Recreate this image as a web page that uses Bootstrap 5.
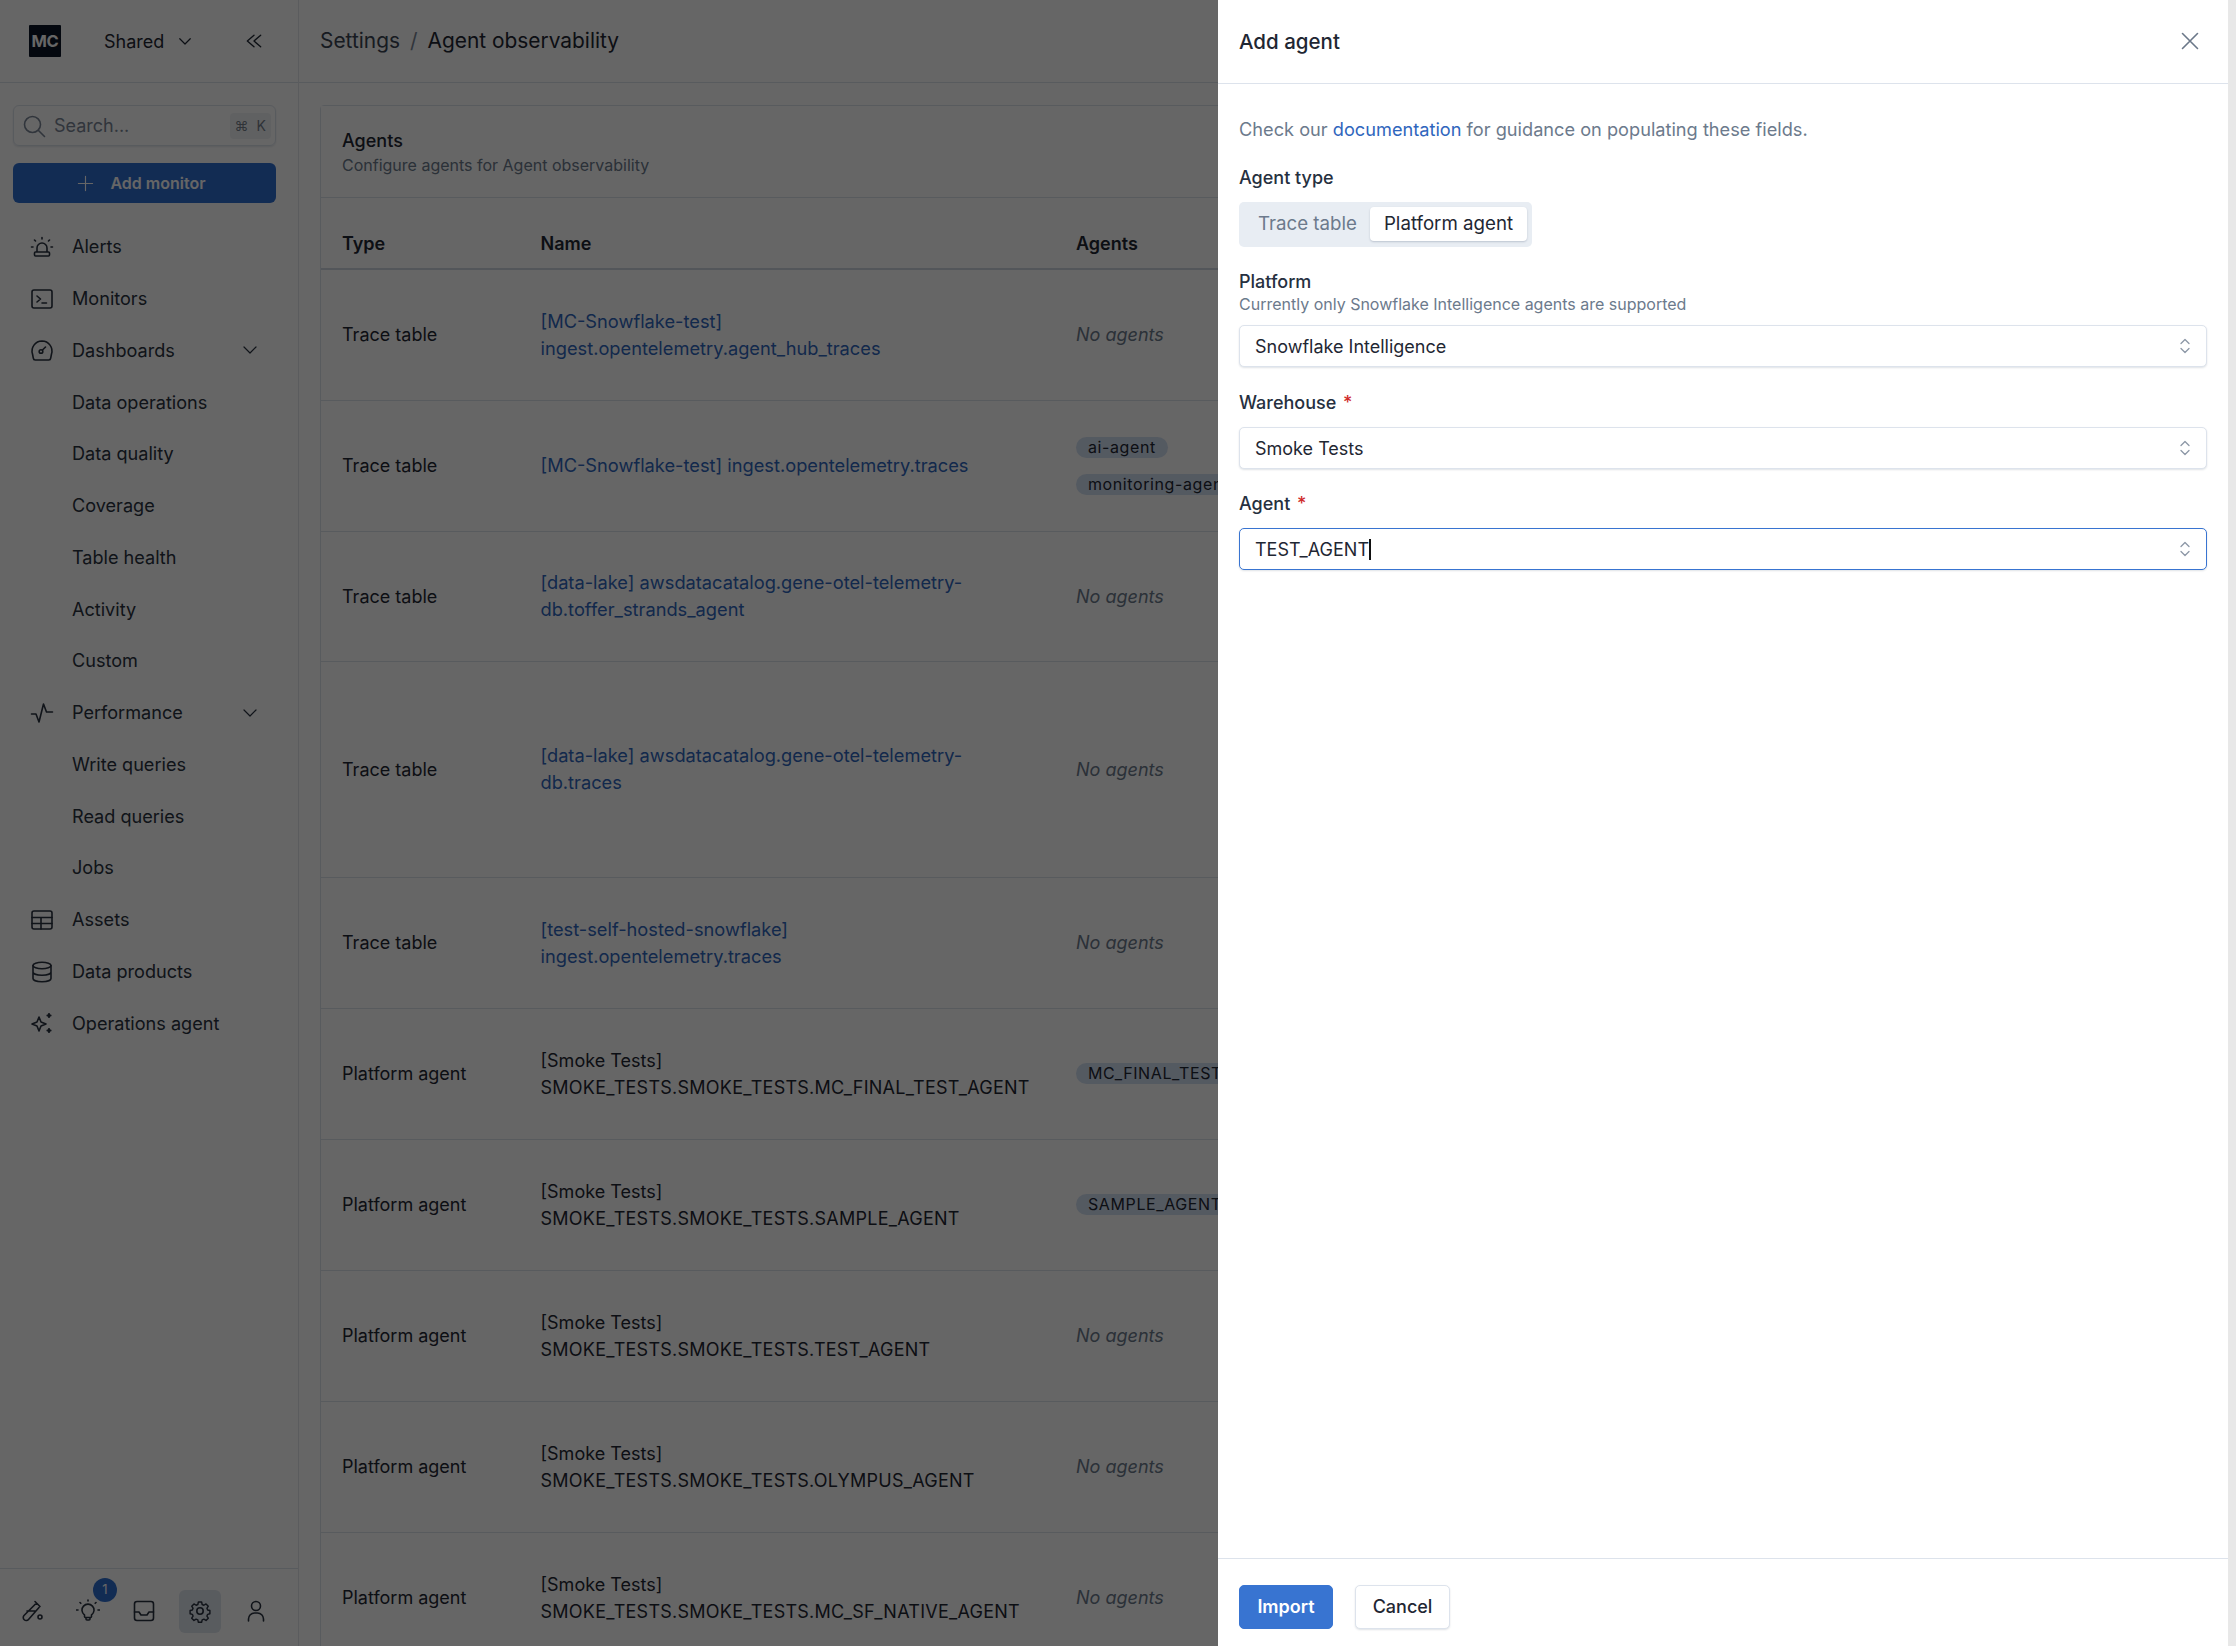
<!doctype html>
<html lang="en"><head><meta charset="utf-8"><title>Agent observability</title>
<link href="https://cdn.jsdelivr.net/npm/bootstrap@5.3.0/dist/css/bootstrap.min.css" rel="stylesheet">
<style>
:root{--ink:#1f2733;--muted:#6c7a8c;--line:#dde3ec;--blue:#3874d1;}
html,body{height:100%;overflow:hidden}
body{font-family:Inter,"Liberation Sans",sans-serif;font-size:18px;color:var(--ink);background:#fff}
svg.ico{width:24px;height:24px;fill:none;stroke:currentColor;stroke-width:1.6;stroke-linecap:round;stroke-linejoin:round;flex:none}
.side{width:299px;flex:none;border-right:1px solid #e3e6ea;height:100vh;background:#fff}
.topbar{height:83px;flex:none;border-bottom:1px solid var(--line)}
.side-top{padding-left:29px;gap:0}
.mc-logo{width:32px;height:32px;background:#0b1526;color:#fff;font-weight:700;font-size:16.5px;border-radius:1px;letter-spacing:-.2px}
.shared{margin-left:43px;font-size:18px;width:72px}
.side-search{margin:22px 22px 0 13px;height:41px;border:1px solid var(--line);border-radius:6px;padding:0 4px 0 8px;color:#7a8696;box-shadow:0 1px 2px rgba(30,50,80,.12)}
.kbd-hint{background:#f1f3f6;border-radius:4px;font-size:14px;padding:1px 5px;color:#77808c;height:26px;margin-left:auto}
.btn-add{margin:17px 22px 0 13px;height:40px;background:#2f6ed0;border:0;border-radius:6px;color:#fff;font-weight:600;font-size:16px;--bs-btn-color:#fff;padding-right:18px}
.nav-stack{margin-top:18px;padding:0;list-style:none}
.nav-row{height:51.75px;padding-left:72px;padding-right:39px;position:relative;font-size:18.1px;color:#2a3240}
.nav-row svg.lead-ico{position:absolute;left:30px;top:14px}
.nav-row .chev{margin-left:auto}
.side-bottom{height:78px;border-top:1px solid var(--line);padding:7px 0 0 11px}
.bot-btn{width:42px;height:43px;margin-right:14px;border-radius:6px;position:relative;color:#2a3240}
.bot-btn.on{background:#dfe5ee}
.bot-badge{position:absolute;top:-12px;left:26px;width:24px;height:24px;border-radius:50%;background:#2f6ed0;color:#fff;font-size:13px;line-height:1}
.main-col{min-width:0;height:100vh}
.crumbs{padding-left:21px;font-size:20.9px;gap:10px}
.crumbs .first{color:#3b4553}.crumbs .sep{color:#7a8696}
.agents-card{margin:22px 0 0 21px;width:1880px;border:1px solid var(--line);border-radius:4px 0 0 0;--bs-card-bg:#fff}
.agents-head{height:92px;padding:23px 21px 0;border-bottom:1px solid var(--line);background:#fff}
.agents-head .ttl{font-weight:500;font-size:18px;line-height:24px}
.agents-head .sub{font-size:16px;color:var(--muted);line-height:24px}
.agent-tbl{table-layout:fixed;margin:0;--bs-table-border-color:var(--line);font-size:18px;line-height:27px;color:var(--ink)}
.agent-tbl th{font-weight:600;height:71px;vertical-align:bottom;padding:8px 0 11px 21px;border-bottom:2px solid #cfd6e0}
.agent-tbl td{vertical-align:middle;padding:0 0 0 21px}
.agent-tbl .c1{width:198.500px}.agent-tbl .c2{width:535.500px}
.agent-tbl a{color:#2f66bd;text-decoration:none;font-size:18.25px}
.caps-line{letter-spacing:.25px}
.none-txt{font-style:italic;color:var(--muted)}
.chip{display:block;width:fit-content;background:#d3e0f3;border-radius:11px;height:21px;font-size:16px;line-height:21px;padding:0 12px;letter-spacing:.6px;white-space:nowrap;color:#1f2733}
.chip+.chip{margin-top:16px}
.veil.offcanvas-backdrop{opacity:1!important;background:rgba(0,0,0,.6);width:100vw;height:100vh}
.scroll-strip{position:fixed;top:0;right:0;bottom:0;width:8px;background:#e8e8e8;z-index:1046}
.drawer.offcanvas{--bs-offcanvas-width:1010px;right:8px;border:0;color:var(--ink)}
.drawer .offcanvas-header{height:84px;padding:0 26px 0 21px;border-bottom:1px solid var(--line)}
.drawer .offcanvas-title{font-size:20.5px;font-weight:500;line-height:1;padding-top:2px}
.x-btn{background:none;border:0;padding:0;color:#6b7889;width:24px;height:24px;display:flex;margin-top:-2px}
.drawer .offcanvas-body{padding:32px 21px 0;overflow:hidden}
.intro{margin:0;line-height:27px;color:var(--muted);font-size:18.2px}
.intro a{color:#2f66bd;text-decoration:none}
.f-label{font-size:18px;font-weight:500;line-height:24px;margin:0;color:#263040}
.f-label .req{color:#d02b2b;margin-left:2px}
.f-help{font-size:16px;color:var(--muted);line-height:20px}
.seg{display:inline-flex;background:#e8edf3;border-radius:5px;padding:5px 5px 6px 6px;height:45px;margin-top:12px;margin-bottom:23px;font-size:18.7px}
.seg span{display:flex;align-items:center;border-radius:4px;padding-top:1px!important}
.seg .off{color:var(--muted);padding:0 13px 0 13px}
.seg .act{background:#fff;padding:0 14px;box-shadow:0 1px 2px rgba(30,50,80,.22)}
.pick.form-select{height:42px;width:100%;padding:0 40px 0 15px;line-height:41px;font-size:18px;color:var(--ink);border:1px solid var(--line);border-radius:5px;box-shadow:0 1px 2px rgba(30,50,80,.14);background-image:none;background-color:#fff;position:relative}
.pick svg{position:absolute;right:14px;top:11px;width:14px;height:18px;fill:none;stroke:#8c97a6;stroke-width:1.3;stroke-linecap:round;stroke-linejoin:round}
.pick.focused{border-color:var(--blue)}
.caret-bar{display:inline-block;width:1.5px;height:21px;background:#111;vertical-align:-4px}
.drawer-foot{height:88px;border-top:1px solid var(--line);padding:26px 21px 0;gap:22px;flex:none}
.btn-imp,.btn-can{width:94px;height:44px;border-radius:5px;font-weight:600;font-size:18px;padding:0;line-height:1}
.btn-can{width:95px}
.btn-imp{--bs-btn-bg:var(--blue);--bs-btn-border-color:var(--blue);--bs-btn-color:#fff}
.btn-can{--bs-btn-bg:#fff;--bs-btn-border-color:#dde3ec;--bs-btn-color:#1f2733;box-shadow:0 1px 2px rgba(30,50,80,.14);font-weight:500}
</style></head>
<body>
<div class="d-flex">
<aside class="side d-flex flex-column">
  <div class="topbar side-top d-flex align-items-center">
    <div class="mc-logo d-flex align-items-center justify-content-center">MC</div>
    <span class="shared">Shared</span>
    <svg class="ico" style="width:18px;height:18px" viewBox="0 0 24 24"><path d="M5 9l7 7 7-7"/></svg>
    <svg class="ico" style="margin-left:50px;width:20px;height:20px" viewBox="0 0 24 24"><path d="M12 5l-8 7 8 7M20 5l-8 7 8 7"/></svg>
  </div>
  <div class="side-search d-flex align-items-center gap-2">
    <svg class="ico" viewBox="0 0 24 24"><circle cx="10.5" cy="10.5" r="8"/><path d="M16.5 16.5l6 6"/></svg>
    <span>Search...</span><span class="kbd-hint d-flex align-items-center gap-2"><span>⌘</span><span>K</span></span>
  </div>
  <button class="btn btn-add d-flex align-items-center justify-content-center gap-3" type="button"><svg class="ico" style="width:17px;height:17px" viewBox="0 0 24 24"><path d="M12 2v20M2 12h20"/></svg>Add monitor</button>
  <ul class="nav-stack">
    <li class="nav-row d-flex align-items-center"><svg class="ico lead-ico" viewBox="0 0 24 24"><path d="M7 17v-4a5 5 0 0 1 10 0v4M5.500 17h13a1 1 0 0 1 1 1v2a1 1 0 0 1-1 1h-13a1 1 0 0 1-1-1v-2a1 1 0 0 1 1-1zM12 2.500v1.500M4.500 5l1 1M19.500 5l-1 1M1.500 12h1.500M21 12h1.500"/></svg>Alerts</li>
    <li class="nav-row d-flex align-items-center"><svg class="ico lead-ico" viewBox="0 0 24 24"><rect x="2" y="3" width="20" height="18" rx="2"/><path d="M7 9l3.500 3L7 15M12 16h4.500"/></svg>Monitors</li>
    <li class="nav-row d-flex align-items-center"><svg class="ico lead-ico" viewBox="0 0 24 24"><path d="M12 2a10 10 0 0 1 9.500 13l-.8 4.200a2 2 0 0 1-2 1.800H5.300a2 2 0 0 1-2-1.800L2.500 15A10 10 0 0 1 12 2z"/><circle cx="11" cy="12.500" r="1.800"/><path d="M12.500 11l3-3"/></svg>Dashboards<svg class="ico chev" style="width:18px;height:18px" viewBox="0 0 24 24"><path d="M4 8l8 8 8-8"/></svg></li>
    <li class="nav-row d-flex align-items-center">Data operations</li>
    <li class="nav-row d-flex align-items-center">Data quality</li>
    <li class="nav-row d-flex align-items-center">Coverage</li>
    <li class="nav-row d-flex align-items-center">Table health</li>
    <li class="nav-row d-flex align-items-center">Activity</li>
    <li class="nav-row d-flex align-items-center">Custom</li>
    <li class="nav-row d-flex align-items-center"><svg class="ico lead-ico" viewBox="0 0 24 24"><path d="M1.500 13H6l3 8 4.500-18 3 8h6"/></svg>Performance<svg class="ico chev" style="width:18px;height:18px" viewBox="0 0 24 24"><path d="M4 8l8 8 8-8"/></svg></li>
    <li class="nav-row d-flex align-items-center">Write queries</li>
    <li class="nav-row d-flex align-items-center">Read queries</li>
    <li class="nav-row d-flex align-items-center">Jobs</li>
    <li class="nav-row d-flex align-items-center"><svg class="ico lead-ico" viewBox="0 0 24 24"><rect x="2" y="3" width="20" height="18" rx="2"/><path d="M2 9.500h20M11 9.500V21M2 15.500h20"/></svg>Assets</li>
    <li class="nav-row d-flex align-items-center"><svg class="ico lead-ico" viewBox="0 0 24 24"><ellipse cx="12" cy="5.500" rx="9" ry="3.200"/><path d="M3 5.500v13c0 1.800 4 3.200 9 3.200s9-1.400 9-3.200v-13M3 12c0 1.800 4 3.200 9 3.200s9-1.400 9-3.200"/></svg>Data products</li>
    <li class="nav-row d-flex align-items-center"><svg class="ico lead-ico" viewBox="0 0 24 24"><path d="M9 6l2 5 5 2-5 2-2 5-2-5-5-2 5-2z"/><path d="M19 3v3M17.500 4.500h3M19 18v3M17.500 19.500h3" stroke-width="2.200"/></svg>Operations agent</li>
  </ul>
  <div class="side-bottom mt-auto d-flex align-items-center">
    <span class="bot-btn d-flex align-items-center justify-content-center"><svg class="ico" viewBox="0 0 24 24"><path d="M15 2.500l5 5M16.500 4L4 16.500a3 3 0 0 0 4.500 4L19 8.500M7 12h8"/><circle cx="20" cy="18" r="2"/></svg></span>
    <span class="bot-btn d-flex align-items-center justify-content-center"><svg class="ico" viewBox="0 0 24 24"><path d="M8.500 16a6 6 0 1 1 7 0v1.500a1 1 0 0 1-1 1h-5a1 1 0 0 1-1-1zM10 18.500v1.500a1 1 0 0 0 1 1h2a1 1 0 0 0 1-1v-1.500M12 1v1M4 3.500l.8.800M20 3.500l-.8.800M.5 11h1.500M22 11h1.500"/></svg><span class="bot-badge d-flex align-items-center justify-content-center">1</span></span>
    <span class="bot-btn d-flex align-items-center justify-content-center"><svg class="ico" viewBox="0 0 24 24"><rect x="2.500" y="2.500" width="19" height="19" rx="2.500"/><path d="M2.500 13H7l2 3h6l2-3h4.500"/></svg></span>
    <span class="bot-btn on d-flex align-items-center justify-content-center"><svg class="ico" viewBox="0 0 24 24"><circle cx="12" cy="12" r="3.200"/><path d="M10.200 2h3.600l.6 2.800 1.900.8 2.400-1.500 2.500 2.500-1.500 2.400.8 1.900 2.500.6v3.600l-2.500.6-.8 1.900 1.500 2.400-2.500 2.500-2.400-1.500-1.900.8-.6 2.800h-3.600l-.6-2.800-1.900-.8-2.400 1.500-2.500-2.500 1.500-2.400-.8-1.900-2.500-.6v-3.600l2.500-.6.800-1.900-1.500-2.400 2.500-2.500 2.400 1.500 1.900-.8z" transform="translate(1.200 1.200) scale(.9)"/></svg></span>
    <span class="bot-btn d-flex align-items-center justify-content-center"><svg class="ico" viewBox="0 0 24 24"><circle cx="12" cy="7" r="4.500"/><path d="M4.500 22v-2a6 6 0 0 1 6-6h3a6 6 0 0 1 6 6v2"/></svg></span>
  </div>
</aside>
<main class="main-col flex-grow-1 overflow-hidden">
  <div class="topbar crumbs d-flex align-items-center"><span class="first">Settings</span><span class="sep">/</span><span>Agent observability</span></div>
  <section class="card agents-card">
    <div class="agents-head"><div class="ttl">Agents</div><div class="sub">Configure agents for Agent observability</div></div>
    <table class="table agent-tbl">
      <thead><tr><th class="c1">Type</th><th class="c2">Name</th><th>Agents</th></tr></thead>
      <tbody>
        <tr style="height:131px"><td>Trace table</td><td><a href="#">[MC-Snowflake-test]<br>ingest.opentelemetry.agent_hub_traces</a></td><td><span class="none-txt">No agents</span></td></tr>
        <tr style="height:131px"><td>Trace table</td><td><a href="#">[MC-Snowflake-test] ingest.opentelemetry.traces</a></td><td><span class="chip">ai-agent</span><span class="chip">monitoring-agent</span></td></tr>
        <tr style="height:130px"><td>Trace table</td><td><a href="#">[data-lake] awsdatacatalog.gene-otel-telemetry-<br>db.toffer_strands_agent</a></td><td><span class="none-txt">No agents</span></td></tr>
        <tr style="height:216px"><td>Trace table</td><td><a href="#">[data-lake] awsdatacatalog.gene-otel-telemetry-<br>db.traces</a></td><td><span class="none-txt">No agents</span></td></tr>
        <tr style="height:131px"><td>Trace table</td><td><a href="#">[test-self-hosted-snowflake]<br>ingest.opentelemetry.traces</a></td><td><span class="none-txt">No agents</span></td></tr>
        <tr style="height:131px"><td>Platform agent</td><td>[Smoke Tests]<br><span class="caps-line">SMOKE_TESTS.SMOKE_TESTS.MC_FINAL_TEST_AGENT</span></td><td><span class="chip">MC_FINAL_TEST_AGENT</span></td></tr>
        <tr style="height:131px"><td>Platform agent</td><td>[Smoke Tests]<br><span class="caps-line">SMOKE_TESTS.SMOKE_TESTS.SAMPLE_AGENT</span></td><td><span class="chip">SAMPLE_AGENT</span></td></tr>
        <tr style="height:131px"><td>Platform agent</td><td>[Smoke Tests]<br><span class="caps-line">SMOKE_TESTS.SMOKE_TESTS.TEST_AGENT</span></td><td><span class="none-txt">No agents</span></td></tr>
        <tr style="height:131px"><td>Platform agent</td><td>[Smoke Tests]<br><span class="caps-line">SMOKE_TESTS.SMOKE_TESTS.OLYMPUS_AGENT</span></td><td><span class="none-txt">No agents</span></td></tr>
        <tr style="height:131px"><td>Platform agent</td><td>[Smoke Tests]<br><span class="caps-line">SMOKE_TESTS.SMOKE_TESTS.MC_SF_NATIVE_AGENT</span></td><td><span class="none-txt">No agents</span></td></tr>
      </tbody>
    </table>
  </section>
</main>
</div>
<div class="offcanvas-backdrop show veil"></div>
<div class="scroll-strip"></div>
<div class="offcanvas offcanvas-end show drawer" tabindex="-1" aria-label="Add agent" data-bs-backdrop="false" data-bs-scroll="true">
  <div class="offcanvas-header">
    <h5 class="offcanvas-title">Add agent</h5>
    <button class="x-btn" type="button" aria-label="Close"><svg class="ico" viewBox="0 0 24 24"><path d="M4.500 4.500l15 15M19.500 4.500l-15 15"/></svg></button>
  </div>
  <div class="offcanvas-body">
    <p class="intro">Check our <a href="#">documentation</a> for guidance on populating these fields.</p>
    <p class="f-label" style="margin-top:23px">Agent type</p>
    <div class="seg"><span class="off">Trace table</span><span class="act">Platform agent</span></div>
    <p class="f-label">Platform</p>
    <div class="f-help" style="margin-bottom:11px">Currently only Snowflake Intelligence agents are supported</div>
    <div class="form-select pick">Snowflake Intelligence<svg viewBox="0 0 14 18"><path d="M3 6.500L7 2.500l4 4M3 11.500l4 4 4-4"/></svg></div>
    <p class="f-label" style="margin-top:24px;margin-bottom:12px">Warehouse <span class="req">*</span></p>
    <div class="form-select pick">Smoke Tests<svg viewBox="0 0 14 18"><path d="M3 6.500L7 2.500l4 4M3 11.500l4 4 4-4"/></svg></div>
    <p class="f-label" style="margin-top:23px;margin-bottom:12px">Agent <span class="req">*</span></p>
    <div class="form-select pick focused">TEST_AGENT<span class="caret-bar"></span><svg viewBox="0 0 14 18"><path d="M3 6.500L7 2.500l4 4M3 11.500l4 4 4-4"/></svg></div>
  </div>
  <div class="drawer-foot d-flex align-items-start">
    <button class="btn btn-imp" type="button">Import</button>
    <button class="btn btn-can" type="button">Cancel</button>
  </div>
</div>
<script src="https://cdn.jsdelivr.net/npm/bootstrap@5.3.0/dist/js/bootstrap.bundle.min.js"></script>
</body></html>
